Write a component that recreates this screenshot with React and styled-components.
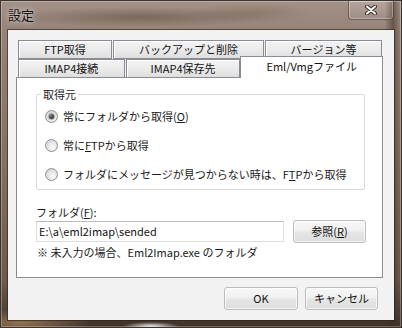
import React from "react";
import styled, { createGlobalStyle } from "styled-components";

const Global = createGlobalStyle`
  html, body { margin: 0; padding: 0; background: #3a3028; }
  body { font-family: "Noto Sans CJK JP", "Noto Sans", sans-serif; }
  * { box-sizing: border-box; }
`;

const Window = styled.div`
  width: 402px;
  height: 328px;
  border: 1px solid #3e342d;
  box-shadow: inset 0 0 0 1px rgba(255, 255, 255, 0.28);
  padding: 0 7px 7px 7px;
  display: flex;
  flex-direction: column;
  background:
    radial-gradient(ellipse 28px 4px at 150px 325px, rgba(255, 255, 255, 0.85), transparent),
    radial-gradient(ellipse 70px 14px at 20px 322px, rgba(210, 160, 110, 0.55), transparent),
    radial-gradient(ellipse 130px 10px at 140px 16px, rgba(85, 65, 50, 0.45), transparent),
    radial-gradient(ellipse 60px 10px at 250px 12px, rgba(110, 90, 75, 0.35), transparent),
    linear-gradient(90deg, rgba(0,0,0,0) 96%, rgba(60,45,35,0.55) 98%, rgba(0,0,0,0) 100%),
    linear-gradient(180deg, #a39187 0px, #958378 30px, #86725f 150px, #6c5a4a 280px, #3c3128 328px);
`;

const TitleBar = styled.div`
  height: 29px;
  display: flex;
  justify-content: space-between;
  align-items: flex-start;
`;

const Title = styled.div`
  padding-top: 6px;
  font-size: 13px;
  line-height: 16px;
  color: #111;
  text-shadow: 0 0 6px rgba(255, 255, 255, 0.7), 0 0 2px rgba(255, 255, 255, 0.5);
`;

const CloseButton = styled.div`
  width: 46px;
  height: 19px;
  border: 1px solid rgba(60, 45, 35, 0.55);
  border-top: none;
  border-radius: 0 0 4px 4px;
  box-shadow: inset 0 0 0 1px rgba(255, 255, 255, 0.3);
  background: linear-gradient(180deg, rgba(255,255,255,0.18), rgba(255,255,255,0.05));
  display: flex;
  align-items: center;
  justify-content: center;
`;

const Client = styled.div`
  flex: 1;
  background: #f2f2f2;
  box-shadow: 0 0 0 1px rgba(40, 30, 25, 0.6);
  padding: 10px 0 0 8px;
  display: flex;
  flex-direction: column;
  font-size: 11px;
  color: #1a1a1a;
`;

const TabControl = styled.div`
  width: 367px;
  display: flex;
  flex-direction: column;
`;

const TabRow = styled.div`
  display: flex;
  align-items: flex-end;
  padding-left: 2px;
  height: ${(p) => p.$h}px;
`;

const Tab = styled.div`
  width: ${(p) => p.$w}px;
  margin-right: ${(p) => p.$gap || 0}px;
  height: ${(p) => (p.$active ? 22 : p.$top ? 19 : 18)}px;
  border: 1px solid #898c95;
  border-bottom: ${(p) => (p.$top ? "1px solid #898c95" : "none")};
  background: ${(p) =>
    p.$active ? "#ffffff" : "linear-gradient(180deg, #f3f3f3 0%, #ebebeb 50%, #dedede 100%)"};
  box-shadow: ${(p) => (p.$active ? "none" : "inset 1px 1px 0 #ffffff")};
  text-align: center;
  font-size: 11px;
  line-height: ${(p) => (p.$active ? 19 : 16)}px;
  color: #111;
  white-space: nowrap;
  position: relative;
  z-index: ${(p) => (p.$active ? 2 : 0)};
  margin-bottom: ${(p) => (p.$active ? -1 : 0)}px;
`;

const Panel = styled.div`
  height: 201px;
  border: 1px solid #898c95;
  background: #ffffff;
  padding: 9px 0 0 19px;
  display: flex;
  flex-direction: column;
`;

const Group = styled.fieldset`
  margin: 0;
  width: 329px;
  border: 1px solid #d5dadf;
  border-radius: 2px;
  padding: 7px 0 7px 8px;
  display: flex;
  flex-direction: column;
  gap: 13px;
`;

const Legend = styled.legend`
  margin-left: -4px;
  padding: 0 2px;
  font-size: 11px;
  line-height: 14px;
`;

const RadioRow = styled.label`
  display: flex;
  align-items: center;
  height: 16px;
  line-height: 16px;
  gap: 2px;
  white-space: nowrap;
`;

const RadioCircle = styled.span`
  width: 13px;
  height: 13px;
  margin-right: 1px;
  flex: none;
  border-radius: 50%;
  border: 1px solid #8e8f8f;
  background: radial-gradient(circle at 60% 65%, #fbfbfb 0%, #e6e6e6 45%, #c9c9c9 100%);
  display: flex;
  align-items: center;
  justify-content: center;
  &::after {
    content: "";
    width: 5px;
    height: 5px;
    border-radius: 50%;
    display: ${(p) => (p.$checked ? "block" : "none")};
    background: radial-gradient(circle at 40% 35%, #8a8a8a 0%, #3a3a3a 55%, #151515 100%);
    box-shadow: 0 0 1px 1px rgba(90, 90, 90, 0.45);
  }
`;

const RadioText = styled.span`
  margin-left: 2px;
`;

const U = styled.span`
  text-decoration: underline;
  text-underline-offset: 1px;
`;

const FieldLabel = styled.div`
  margin-top: 14px;
  line-height: 16px;
`;

const FieldRow = styled.div`
  display: flex;
  align-items: center;
  gap: 9px;
  height: 23px;
`;

const TextBox = styled.div`
  width: 248px;
  height: 21px;
  border: 1px solid #dadde3;
  border-top-color: #b8bcc4;
  background: #fff;
  padding-left: 2px;
  line-height: 19px;
  font-size: 11px;
  color: #111;
`;

const Button = styled.div`
  width: ${(p) => p.$w}px;
  height: 23px;
  border: 1px solid #bcbcbc;
  border-radius: 3px;
  background: linear-gradient(180deg, #f8f8f8 0%, #f0f0f0 45%, #e5e5e5 55%, #dddddd 100%);
  box-shadow: inset 0 0 0 1px rgba(255, 255, 255, 0.7);
  text-align: center;
  line-height: 21px;
  font-size: 11px;
  color: #111;
`;

const Note = styled.div`
  margin-top: 1px;
  line-height: 16px;
  padding-left: 1px;
`;

const ButtonRow = styled.div`
  margin-top: 9px;
  display: flex;
  justify-content: flex-end;
  gap: 7px;
  padding-right: 16px;
`;

const CloseGlyph = () => (
  <svg width="12" height="10" viewBox="0 0 12 10">
    <path d="M2 1.5 L10 8.5 M10 1.5 L2 8.5" stroke="#3a2e26" strokeWidth="4" strokeLinecap="round" />
    <path d="M2 1.5 L10 8.5 M10 1.5 L2 8.5" stroke="#ffffff" strokeWidth="2" strokeLinecap="round" />
  </svg>
);

const Radio = ({ checked, children }) => (
  <RadioRow>
    <RadioCircle $checked={checked} />
    <RadioText>{children}</RadioText>
  </RadioRow>
);

export default function App() {
  return (
    <>
      <Global />
      <Window>
        <TitleBar>
          <Title>設定</Title>
          <CloseButton>
            <CloseGlyph />
          </CloseButton>
        </TitleBar>
        <Client>
          <TabControl>
            <TabRow $h={19}>
              <Tab $top $w={94} $gap={1}>FTP取得</Tab>
              <Tab $top $w={151} $gap={1}>バックアップと削除</Tab>
              <Tab $top $w={117}>バージョン等</Tab>
            </TabRow>
            <TabRow $h={18}>
              <Tab $w={107} $gap={1}>IMAP4接続</Tab>
              <Tab $w={115}>IMAP4保存先</Tab>
              <Tab $w={143} $active>Eml/Vmgファイル</Tab>
            </TabRow>
            <Panel>
              <Group>
                <Legend>取得元</Legend>
                <Radio checked>
                  常にフォルダから取得(<U>O</U>)
                </Radio>
                <Radio>
                  常に<U>F</U>TPから取得
                </Radio>
                <Radio>
                  フォルダにメッセージが見つからない時は、F<U>T</U>Pから取得
                </Radio>
              </Group>
              <FieldLabel>
                フォルダ(<U>F</U>):
              </FieldLabel>
              <FieldRow>
                <TextBox>E:\a\eml2imap\sended</TextBox>
                <Button $w={73}>
                  参照(<U>R</U>)
                </Button>
              </FieldRow>
              <Note>※ 未入力の場合、Eml2Imap.exe のフォルダ</Note>
            </Panel>
          </TabControl>
          <ButtonRow>
            <Button $w={74}>OK</Button>
            <Button $w={73}>キャンセル</Button>
          </ButtonRow>
        </Client>
      </Window>
    </>
  );
}
